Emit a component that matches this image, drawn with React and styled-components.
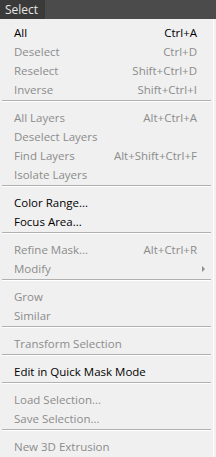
import React from "react";
import styled, { createGlobalStyle } from "styled-components";

const Global = createGlobalStyle`
  html, body {
    margin: 0;
    padding: 0;
    background: #f0f0f0;
  }
  body {
    font-family: "Open Sans", "Noto Sans", sans-serif;
  }
`;

const Page = styled.div`
  width: 216px;
  height: 457px;
  overflow: hidden;
  background: #f0f0f0;
`;

const MenuBar = styled.div`
  height: 19px;
  background: #4b4b4b;
  display: flex;
  align-items: stretch;
`;

const MenuTab = styled.div`
  width: 45px;
  background: #3a3a3a;
  color: #e6e6e6;
  font-size: 12px;
  line-height: 19px;
  padding-left: 5px;
  box-sizing: border-box;
`;

const Menu = styled.div`
  width: 214px;
  padding-top: 4px;
  border-right: 1px solid #ffffff;
  box-sizing: border-box;
  height: 438px;
`;

const Row = styled.div`
  height: 19px;
  display: flex;
  align-items: center;
  padding: 0 16px 0 14px;
  font-size: 11.5px;
  color: ${(p) => (p.$on ? "#000000" : "#8c8c8c")};
  white-space: nowrap;
`;

const Label = styled.span`
  flex: 1;
`;

const Shortcut = styled.span`
  text-align: right;
`;

const Arrow = styled.span`
  width: 0;
  height: 0;
  border-top: 3px solid transparent;
  border-bottom: 3px solid transparent;
  border-left: 3px solid #8c8c8c;
  margin-right: -8px;
`;

const Separator = styled.div`
  height: 1px;
  background: #b0b0b0;
  border-bottom: 1px solid #ffffff;
  margin: 1px 2px 6px 2px;
`;

const groups = [
  [
    { label: "All", key: "Ctrl+A", on: true },
    { label: "Deselect", key: "Ctrl+D" },
    { label: "Reselect", key: "Shift+Ctrl+D" },
    { label: "Inverse", key: "Shift+Ctrl+I" },
  ],
  [
    { label: "All Layers", key: "Alt+Ctrl+A" },
    { label: "Deselect Layers" },
    { label: "Find Layers", key: "Alt+Shift+Ctrl+F" },
    { label: "Isolate Layers" },
  ],
  [
    { label: "Color Range...", on: true },
    { label: "Focus Area...", on: true },
  ],
  [
    { label: "Refine Mask...", key: "Alt+Ctrl+R" },
    { label: "Modify", sub: true },
  ],
  [{ label: "Grow" }, { label: "Similar" }],
  [{ label: "Transform Selection" }],
  [{ label: "Edit in Quick Mask Mode", on: true }],
  [{ label: "Load Selection..." }, { label: "Save Selection..." }],
  [{ label: "New 3D Extrusion" }],
];

export default function App() {
  return (
    <Page>
      <Global />
      <MenuBar>
        <MenuTab>Select</MenuTab>
      </MenuBar>
      <Menu>
        {groups.map((g, gi) => (
          <React.Fragment key={gi}>
            {gi > 0 && <Separator />}
            {g.map((item) => (
              <Row key={item.label} $on={item.on}>
                <Label>{item.label}</Label>
                {item.key && <Shortcut>{item.key}</Shortcut>}
                {item.sub && <Arrow />}
              </Row>
            ))}
          </React.Fragment>
        ))}
      </Menu>
    </Page>
  );
}
